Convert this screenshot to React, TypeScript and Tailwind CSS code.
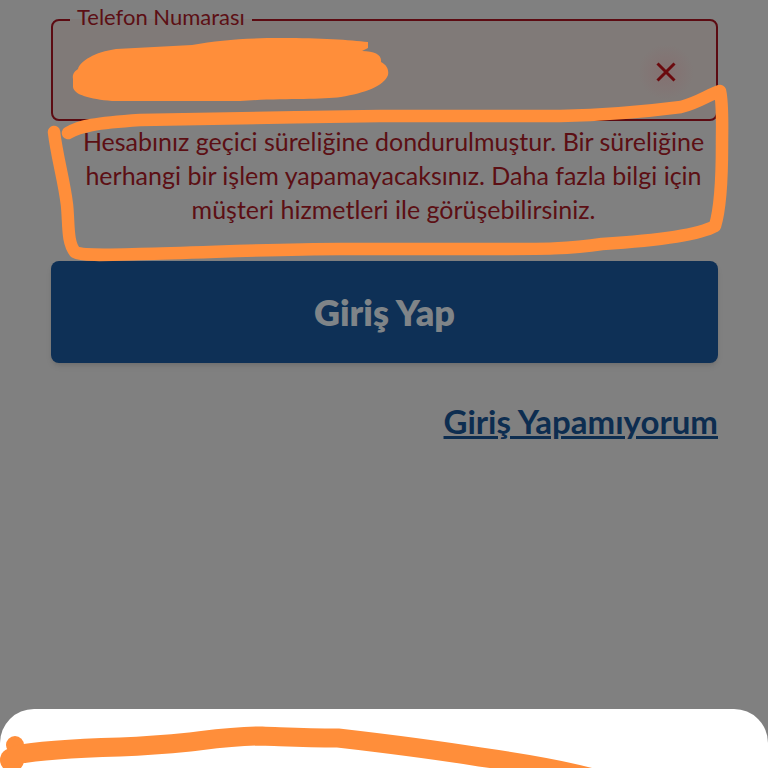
import { useState } from 'react'
import type { FormEvent } from 'react'

// Trazos a mano alzada sobre la pantalla
function Annotations() {
  return (
    <svg
      className="absolute inset-0 w-full h-full pointer-events-none"
      viewBox="0 0 768 768"
      preserveAspectRatio="none"
      fill="none"
      stroke="#ff8e3a"
      strokeLinecap="round"
      strokeLinejoin="round"
      aria-hidden="true"
    >
      {/* Mancha que tapa el número de teléfono */}
      <path
        fill="#ff8e3a"
        stroke="none"
        d="M73 79C72 74 75 71 78 69C80 61 95 52 116 49L192 45C220 40 244 38 282 38C320 38 350 40 368 42L368 48L362 51C375 51 382 55 381 62C387 65 389 70 388 75C384 86 365 93 341 97C320 100 280 98 240 101L112 101C90 99 74 95 73 87Z"
      />
      {/* Recuadro alrededor del mensaje */}
      <path strokeWidth="12.5" d="M68 133C80 126 95 123 140 120C200 119 300 117 380 116L560 116C610 115 650 111 681 107C698 103 708 95 720 91C723 105 722 125 722 145C722 175 721 206 715 226C697 236 650 241 602 244C570 249 540 249 500 249L340 249C270 249 200 253 140 254C105 255 82 256 75 252C67 242 69 225 67 205C64 180 57 157 54 132" />
      {/* Trazo sobre el panel inferior */}
      <circle cx="15" cy="745" r="9" fill="#ff8e3a" stroke="none" />
      <circle cx="12" cy="760" r="12" fill="#ff8e3a" stroke="none" />
      <path strokeWidth="19" d="M16 755C30 752 50 749 120 747C145 746 160 745 190 742C215 739 235 736 262 736C290 737 305 738 338 738C390 744 430 749 480 757C530 764 565 770 600 780" />
    </svg>
  )
}

export default function App() {
  // Estado del campo de teléfono
  const [phone, setPhone] = useState('')

  const handleSubmit = (e: FormEvent) => e.preventDefault()

  return (
    <div className="relative min-h-screen flex flex-col overflow-hidden bg-[#808080] font-['Lato',sans-serif]">
      <form onSubmit={handleSubmit} className="flex flex-col px-[50px] pt-1 pl-[51px]">
        {/* Campo de teléfono */}
        <fieldset className="h-[117px] min-w-0 rounded-lg border-2 border-[#5c0b12] bg-[#807a78] pl-[17px] pr-[22px]">
          <legend className="h-8 px-[7px] text-[22px] leading-[26px] text-[#5c0f14]">
            <label htmlFor="phone">Telefon Numarası</label>
          </legend>
          <div className="flex items-center h-[72px]">
            <input
              id="phone"
              type="tel"
              value={phone}
              onChange={(e) => setPhone(e.target.value)}
              aria-invalid="true"
              aria-describedby="phone-error"
              className="flex-1 min-w-0 h-14 bg-transparent px-2 text-2xl text-[#5c0f14] outline-none"
            />
            <button
              type="button"
              aria-label="Temizle"
              onClick={() => setPhone('')}
              className="flex items-center justify-center w-14 h-14 rounded-full bg-radial from-[#847070] to-[#807a78] to-70%"
            >
              <svg className="w-5 h-5" viewBox="0 0 20 20" fill="none" stroke="#6b0a0e" strokeWidth="3">
                <path d="M1.5 1.5L18.5 18.5M18.5 1.5L1.5 18.5" />
              </svg>
            </button>
          </div>
        </fieldset>

        {/* Mensaje de error */}
        <p id="phone-error" className="pt-[3px] pl-[18px] text-center text-[25px] leading-[34px] text-[#5c0f14]">
          Hesabınız geçici süreliğine dondurulmuştur. Bir süreliğine
          <br />
          herhangi bir işlem yapamayacaksınız. Daha fazla bilgi için
          <br />
          müşteri hizmetleri ile görüşebilirsiniz.
        </p>

        <button
          type="submit"
          className="mt-[35px] h-[102px] rounded-lg bg-[#0e3056] text-[36px] font-extrabold text-[#7f8488] shadow-md"
        >
          Giriş Yap
        </button>

        <a
          href="#"
          className="mt-9 self-end text-[33px] leading-[44px] font-bold text-[#0d2d50] underline decoration-3 underline-offset-2"
        >
          Giriş Yapamıyorum
        </a>
      </form>

      {/* Panel inferior */}
      <section className="mt-auto h-[59px] rounded-t-[34px] bg-white" />

      <Annotations />
    </div>
  )
}
